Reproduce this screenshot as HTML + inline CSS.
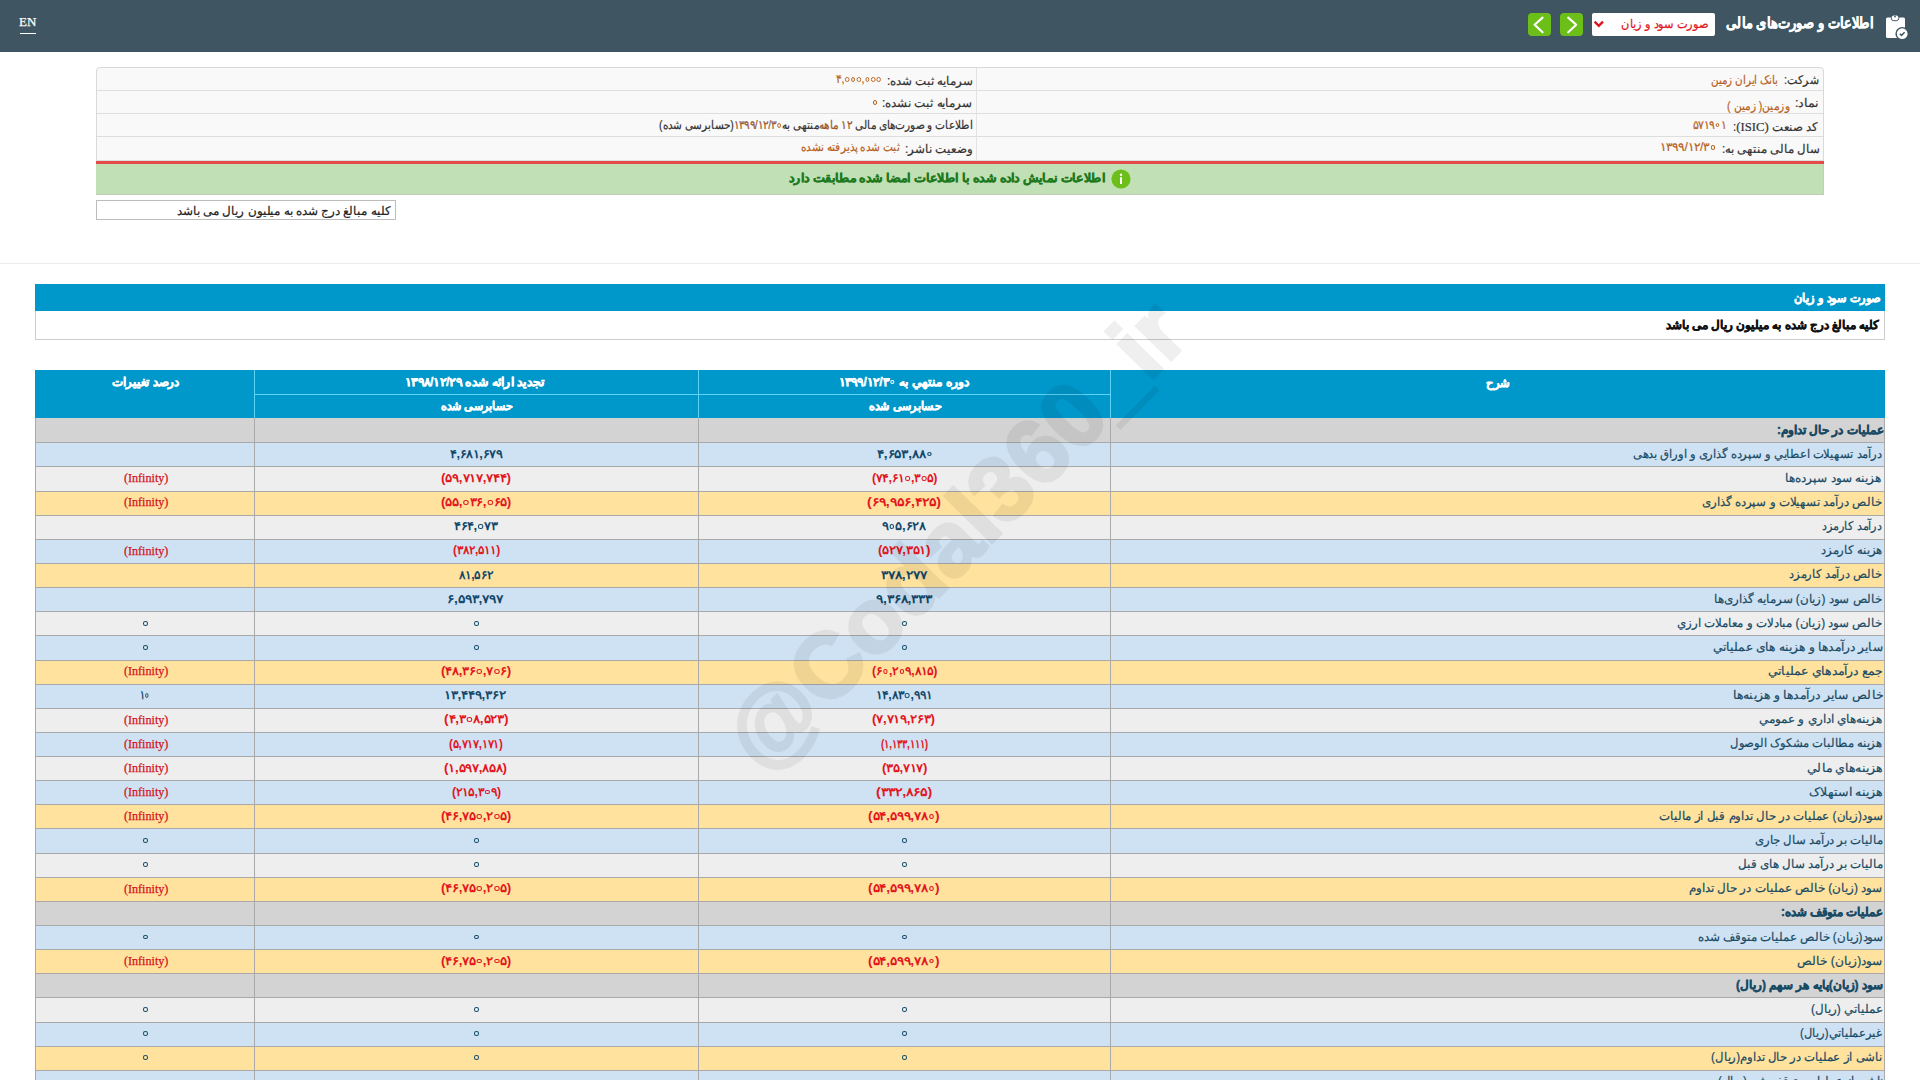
<!DOCTYPE html><html lang="fa"><head><meta charset="utf-8"><title>Codal</title><style>
*{margin:0;padding:0;box-sizing:border-box}
html,body{width:1920px;height:1080px;overflow:hidden;background:#fff}
body{position:relative;font-family:"Liberation Sans",sans-serif}
.a{position:absolute}
.t{position:absolute;white-space:nowrap;line-height:1;transform-origin:0 0}
.z{display:inline-block;width:4.6px;height:4.6px;border:1.6px solid currentColor;border-radius:50%;margin:0 0.9px;vertical-align:1.4px}
.zn{border-width:1.3px}
</style></head><body>
<div class="a" style="left:0;top:0;width:1920px;height:52px;background:#3f5562"></div>
<div class="a" style="left:20px;top:33px;width:16px;height:1px;background:#fff"></div>
<div class="a" style="left:1528px;top:13px;width:23px;height:23px;background:#6cbf18;border-radius:4px"></div>
<svg class="a" style="left:1528px;top:13px" width="23" height="23"><path d="M14.6 4.6 L6.6 11.8 L14.6 19.2" fill="none" stroke="#fff" stroke-width="2.1" stroke-linecap="round" stroke-linejoin="round"/></svg>
<div class="a" style="left:1560px;top:13px;width:23px;height:23px;background:#6cbf18;border-radius:4px"></div>
<svg class="a" style="left:1560px;top:13px" width="23" height="23"><path d="M8.2 4.6 L16.2 11.8 L8.2 19.2" fill="none" stroke="#fff" stroke-width="2.1" stroke-linecap="round" stroke-linejoin="round"/></svg>
<div class="a" style="left:1592px;top:13px;width:123px;height:23px;background:#fff;border-radius:2px"></div>
<svg class="a" style="left:1592px;top:19px" width="14" height="10"><path d="M2.6 2.6 L6.8 6.8 L11 2.6" fill="none" stroke="#e0141e" stroke-width="2.4"/></svg>
<svg class="a" style="left:1880px;top:10px" width="35" height="35" viewBox="0 0 35 35">
<rect x="6" y="7.5" width="19" height="20.5" rx="1.5" fill="#fff"/>
<rect x="11.3" y="5" width="7.5" height="5.7" rx="2.5" fill="#fff" stroke="#3f5562" stroke-width="1"/>
<circle cx="15" cy="6.5" r="0.9" fill="#3f5562"/>
<circle cx="22.2" cy="23.7" r="6.8" fill="#3f5562"/>
<circle cx="22.2" cy="23.7" r="5.4" fill="#fff"/>
<path d="M19.8 23.8 L21.5 25.4 L24.6 22.3" fill="none" stroke="#3f5562" stroke-width="1.5"/>
</svg>
<div class="a" style="left:96px;top:67px;width:1728px;height:97px;background:#f9f9f9;border:1px solid #d9d9d9;border-radius:4px 4px 0 0"></div>
<div class="a" style="left:97px;top:90px;width:1726px;height:1px;background:#dedede"></div>
<div class="a" style="left:97px;top:113px;width:1726px;height:1px;background:#dedede"></div>
<div class="a" style="left:97px;top:136px;width:1726px;height:1px;background:#dedede"></div>
<div class="a" style="left:97px;top:160px;width:1726px;height:1px;background:#dedede"></div>
<div class="a" style="left:976px;top:68px;width:1px;height:92px;background:#e2e2e2"></div>
<div class="a" style="left:96px;top:164px;width:1728px;height:31px;background:#c2e0b5;border-right:1px solid #c0cfbc;border-bottom:1px solid #bccab8"></div>
<div class="a" style="left:96px;top:161px;width:1728px;height:3px;background:#e44a48"></div>
<svg class="a" style="left:1111px;top:169px" width="20" height="20"><circle cx="10" cy="10" r="9.6" fill="#6cbf18"/><rect x="9" y="8.2" width="2" height="6.8" fill="#fff"/><circle cx="10" cy="5.7" r="1.2" fill="#fff"/></svg>
<div class="a" style="left:96px;top:200px;width:300px;height:20px;background:#fff;border:1px solid #bcbcbc"></div>
<div class="a" style="left:0;top:263px;width:1920px;height:1px;background:#ececec"></div>
<div class="a" style="left:35px;top:284px;width:1850px;height:27px;background:#0097ca"></div>
<div class="a" style="left:35px;top:311px;width:1850px;height:29px;background:#fff;border:1px solid #cccccc;border-top:0"></div>
<div class="a" style="left:35px;top:370px;width:1850px;height:48px;background:#0097ca"></div>
<div class="a" style="left:254px;top:370px;width:1px;height:48px;background:#5dd3f7"></div>
<div class="a" style="left:698px;top:370px;width:1px;height:48px;background:#5dd3f7"></div>
<div class="a" style="left:1110px;top:370px;width:1px;height:48px;background:#5dd3f7"></div>
<div class="a" style="left:254px;top:394px;width:856px;height:1px;background:#5dd3f7"></div>
<div class="a" style="left:35px;top:418px;width:1850px;height:24px;background:#d3d3d3"></div>
<div class="a" style="left:35px;top:442px;width:1850px;height:1px;background:#a9a9a9"></div>
<div class="a" style="left:35px;top:443px;width:1850px;height:23px;background:#cfe2f3"></div>
<div class="a" style="left:35px;top:466px;width:1850px;height:1px;background:#a9a9a9"></div>
<div class="a" style="left:35px;top:467px;width:1850px;height:24px;background:#eeeeee"></div>
<div class="a" style="left:35px;top:491px;width:1850px;height:1px;background:#a9a9a9"></div>
<div class="a" style="left:35px;top:492px;width:1850px;height:23px;background:#ffe29d"></div>
<div class="a" style="left:35px;top:515px;width:1850px;height:1px;background:#a9a9a9"></div>
<div class="a" style="left:35px;top:516px;width:1850px;height:23px;background:#eeeeee"></div>
<div class="a" style="left:35px;top:539px;width:1850px;height:1px;background:#a9a9a9"></div>
<div class="a" style="left:35px;top:540px;width:1850px;height:23px;background:#cfe2f3"></div>
<div class="a" style="left:35px;top:563px;width:1850px;height:1px;background:#a9a9a9"></div>
<div class="a" style="left:35px;top:564px;width:1850px;height:23px;background:#ffe29d"></div>
<div class="a" style="left:35px;top:587px;width:1850px;height:1px;background:#a9a9a9"></div>
<div class="a" style="left:35px;top:588px;width:1850px;height:23px;background:#cfe2f3"></div>
<div class="a" style="left:35px;top:611px;width:1850px;height:1px;background:#a9a9a9"></div>
<div class="a" style="left:35px;top:612px;width:1850px;height:23px;background:#eeeeee"></div>
<div class="a" style="left:35px;top:635px;width:1850px;height:1px;background:#a9a9a9"></div>
<div class="a" style="left:35px;top:636px;width:1850px;height:24px;background:#cfe2f3"></div>
<div class="a" style="left:35px;top:660px;width:1850px;height:1px;background:#a9a9a9"></div>
<div class="a" style="left:35px;top:661px;width:1850px;height:23px;background:#ffe29d"></div>
<div class="a" style="left:35px;top:684px;width:1850px;height:1px;background:#a9a9a9"></div>
<div class="a" style="left:35px;top:685px;width:1850px;height:23px;background:#cfe2f3"></div>
<div class="a" style="left:35px;top:708px;width:1850px;height:1px;background:#a9a9a9"></div>
<div class="a" style="left:35px;top:709px;width:1850px;height:23px;background:#eeeeee"></div>
<div class="a" style="left:35px;top:732px;width:1850px;height:1px;background:#a9a9a9"></div>
<div class="a" style="left:35px;top:733px;width:1850px;height:23px;background:#cfe2f3"></div>
<div class="a" style="left:35px;top:756px;width:1850px;height:1px;background:#a9a9a9"></div>
<div class="a" style="left:35px;top:757px;width:1850px;height:23px;background:#eeeeee"></div>
<div class="a" style="left:35px;top:780px;width:1850px;height:1px;background:#a9a9a9"></div>
<div class="a" style="left:35px;top:781px;width:1850px;height:23px;background:#cfe2f3"></div>
<div class="a" style="left:35px;top:804px;width:1850px;height:1px;background:#a9a9a9"></div>
<div class="a" style="left:35px;top:805px;width:1850px;height:23px;background:#ffe29d"></div>
<div class="a" style="left:35px;top:828px;width:1850px;height:1px;background:#a9a9a9"></div>
<div class="a" style="left:35px;top:829px;width:1850px;height:24px;background:#cfe2f3"></div>
<div class="a" style="left:35px;top:853px;width:1850px;height:1px;background:#a9a9a9"></div>
<div class="a" style="left:35px;top:854px;width:1850px;height:23px;background:#eeeeee"></div>
<div class="a" style="left:35px;top:877px;width:1850px;height:1px;background:#a9a9a9"></div>
<div class="a" style="left:35px;top:878px;width:1850px;height:23px;background:#ffe29d"></div>
<div class="a" style="left:35px;top:901px;width:1850px;height:1px;background:#a9a9a9"></div>
<div class="a" style="left:35px;top:902px;width:1850px;height:23px;background:#d3d3d3"></div>
<div class="a" style="left:35px;top:925px;width:1850px;height:1px;background:#a9a9a9"></div>
<div class="a" style="left:35px;top:926px;width:1850px;height:23px;background:#cfe2f3"></div>
<div class="a" style="left:35px;top:949px;width:1850px;height:1px;background:#a9a9a9"></div>
<div class="a" style="left:35px;top:950px;width:1850px;height:23px;background:#ffe29d"></div>
<div class="a" style="left:35px;top:973px;width:1850px;height:1px;background:#a9a9a9"></div>
<div class="a" style="left:35px;top:974px;width:1850px;height:23px;background:#d3d3d3"></div>
<div class="a" style="left:35px;top:997px;width:1850px;height:1px;background:#a9a9a9"></div>
<div class="a" style="left:35px;top:998px;width:1850px;height:24px;background:#eeeeee"></div>
<div class="a" style="left:35px;top:1022px;width:1850px;height:1px;background:#a9a9a9"></div>
<div class="a" style="left:35px;top:1023px;width:1850px;height:23px;background:#cfe2f3"></div>
<div class="a" style="left:35px;top:1046px;width:1850px;height:1px;background:#a9a9a9"></div>
<div class="a" style="left:35px;top:1047px;width:1850px;height:23px;background:#ffe29d"></div>
<div class="a" style="left:35px;top:1070px;width:1850px;height:1px;background:#a9a9a9"></div>
<div class="a" style="left:35px;top:1071px;width:1850px;height:23px;background:#cfe2f3"></div>
<div class="a" style="left:35px;top:1094px;width:1850px;height:1px;background:#a9a9a9"></div>
<div class="a" style="left:872.90px;top:100.00px;width:4.6px;height:4.6px;border:1.3px solid #b8621f;border-radius:50%"></div>
<div class="a" style="left:902.40px;top:620.92px;width:4.8px;height:4.6px;border:1.7px solid #164a66;border-radius:50%"></div>
<div class="a" style="left:474.40px;top:620.92px;width:4.8px;height:4.6px;border:1.7px solid #164a66;border-radius:50%"></div>
<div class="a" style="left:143.40px;top:620.92px;width:4.8px;height:4.6px;border:1.7px solid #164a66;border-radius:50%"></div>
<div class="a" style="left:902.40px;top:645.06px;width:4.8px;height:4.6px;border:1.7px solid #164a66;border-radius:50%"></div>
<div class="a" style="left:474.40px;top:645.06px;width:4.8px;height:4.6px;border:1.7px solid #164a66;border-radius:50%"></div>
<div class="a" style="left:143.40px;top:645.06px;width:4.8px;height:4.6px;border:1.7px solid #164a66;border-radius:50%"></div>
<div class="a" style="left:902.40px;top:838.18px;width:4.8px;height:4.6px;border:1.7px solid #164a66;border-radius:50%"></div>
<div class="a" style="left:474.40px;top:838.18px;width:4.8px;height:4.6px;border:1.7px solid #164a66;border-radius:50%"></div>
<div class="a" style="left:143.40px;top:838.18px;width:4.8px;height:4.6px;border:1.7px solid #164a66;border-radius:50%"></div>
<div class="a" style="left:902.40px;top:862.32px;width:4.8px;height:4.6px;border:1.7px solid #164a66;border-radius:50%"></div>
<div class="a" style="left:474.40px;top:862.32px;width:4.8px;height:4.6px;border:1.7px solid #164a66;border-radius:50%"></div>
<div class="a" style="left:143.40px;top:862.32px;width:4.8px;height:4.6px;border:1.7px solid #164a66;border-radius:50%"></div>
<div class="a" style="left:902.40px;top:934.74px;width:4.8px;height:4.6px;border:1.7px solid #164a66;border-radius:50%"></div>
<div class="a" style="left:474.40px;top:934.74px;width:4.8px;height:4.6px;border:1.7px solid #164a66;border-radius:50%"></div>
<div class="a" style="left:143.40px;top:934.74px;width:4.8px;height:4.6px;border:1.7px solid #164a66;border-radius:50%"></div>
<div class="a" style="left:902.40px;top:1007.16px;width:4.8px;height:4.6px;border:1.7px solid #164a66;border-radius:50%"></div>
<div class="a" style="left:474.40px;top:1007.16px;width:4.8px;height:4.6px;border:1.7px solid #164a66;border-radius:50%"></div>
<div class="a" style="left:143.40px;top:1007.16px;width:4.8px;height:4.6px;border:1.7px solid #164a66;border-radius:50%"></div>
<div class="a" style="left:902.40px;top:1031.30px;width:4.8px;height:4.6px;border:1.7px solid #164a66;border-radius:50%"></div>
<div class="a" style="left:474.40px;top:1031.30px;width:4.8px;height:4.6px;border:1.7px solid #164a66;border-radius:50%"></div>
<div class="a" style="left:143.40px;top:1031.30px;width:4.8px;height:4.6px;border:1.7px solid #164a66;border-radius:50%"></div>
<div class="a" style="left:902.40px;top:1055.44px;width:4.8px;height:4.6px;border:1.7px solid #164a66;border-radius:50%"></div>
<div class="a" style="left:474.40px;top:1055.44px;width:4.8px;height:4.6px;border:1.7px solid #164a66;border-radius:50%"></div>
<div class="a" style="left:143.40px;top:1055.44px;width:4.8px;height:4.6px;border:1.7px solid #164a66;border-radius:50%"></div>
<div class="a" style="left:902.40px;top:1079.58px;width:4.8px;height:4.6px;border:1.7px solid #164a66;border-radius:50%"></div>
<div class="a" style="left:474.40px;top:1079.58px;width:4.8px;height:4.6px;border:1.7px solid #164a66;border-radius:50%"></div>
<div class="a" style="left:143.40px;top:1079.58px;width:4.8px;height:4.6px;border:1.7px solid #164a66;border-radius:50%"></div>
<div class="a" style="left:35px;top:418px;width:1px;height:662px;background:#a9a9a9"></div>
<div class="a" style="left:1884px;top:418px;width:1px;height:662px;background:#a9a9a9"></div>
<div class="a" style="left:254px;top:418px;width:1px;height:662px;background:#a9a9a9"></div>
<div class="a" style="left:698px;top:418px;width:1px;height:662px;background:#a9a9a9"></div>
<div class="a" style="left:1110px;top:418px;width:1px;height:662px;background:#a9a9a9"></div>
<div class="t" id="t0" dir="rtl" style='left:1726.13px;top:15.00px;font-family:"Liberation Sans", sans-serif;font-size:15px;font-weight:bold;color:#ffffff;-webkit-text-stroke:0.45px #ffffff;transform:scaleX(0.8639)'>اطلاعات و صورت‌های مالی</div>
<div class="t" id="t1" dir="rtl" style='left:1621.08px;top:18.00px;font-family:"Liberation Sans", sans-serif;font-size:12px;font-weight:normal;color:#e0141e;-webkit-text-stroke:0.2px #e0141e;transform:scaleX(0.9451)'>صورت سود و زیان</div>
<div class="t" id="t2" dir="ltr" style='left:19.00px;top:15.17px;font-family:"Liberation Serif", serif;font-size:13px;font-weight:normal;color:#ffffff;-webkit-text-stroke:0.25px #ffffff'>EN</div>
<div class="t" id="t3" dir="rtl" style='left:1783.84px;top:74.30px;font-family:"Liberation Sans", sans-serif;font-size:12px;font-weight:normal;color:#333333;-webkit-text-stroke:0.2px #333333;transform:scaleX(0.9118)'>شرکت:</div>
<div class="t" id="t4" dir="rtl" style='left:1710.54px;top:74.00px;font-family:"Liberation Sans", sans-serif;font-size:12px;font-weight:normal;color:#b8621f;-webkit-text-stroke:0.2px #b8621f;transform:scaleX(0.8634)'>بانک ایران زمین</div>
<div class="t" id="t5" dir="rtl" style='left:1794.95px;top:97.00px;font-family:"Liberation Sans", sans-serif;font-size:12px;font-weight:normal;color:#333333;-webkit-text-stroke:0.2px #333333;transform:scaleX(1.0476)'>نماد:</div>
<div class="t" id="t6" dir="rtl" style='left:1727.11px;top:100.00px;font-family:"Liberation Sans", sans-serif;font-size:12px;font-weight:normal;color:#b8621f;-webkit-text-stroke:0.2px #b8621f;transform:scaleX(0.8927)'>وزمین( زمین )</div>
<div class="t" id="t7" dir="rtl" style='left:1732.80px;top:120.40px;font-family:"Liberation Sans", sans-serif;font-size:12px;font-weight:normal;color:#333333;-webkit-text-stroke:0.2px #333333;transform:scaleX(0.9748)'>کد صنعت <span style="font-family:'Liberation Serif',serif;font-size:13px">(ISIC)</span>:</div>
<div class="t" id="t8" dir="ltr" style='left:1692.94px;top:118.60px;font-family:"Liberation Sans", sans-serif;font-size:12px;font-weight:normal;color:#b8621f;-webkit-text-stroke:0.2px #b8621f;transform:scaleX(0.9076)'>۵۷۱۹<span class="z zn"></span>۱</div>
<div class="t" id="t9" dir="rtl" style='left:1721.63px;top:143.00px;font-family:"Liberation Sans", sans-serif;font-size:12px;font-weight:normal;color:#333333;-webkit-text-stroke:0.2px #333333;transform:scaleX(0.9805)'>سال مالی منتهی به:</div>
<div class="t" id="t10" dir="ltr" style='left:1659.96px;top:141.20px;font-family:"Liberation Sans", sans-serif;font-size:12px;font-weight:normal;color:#b8621f;-webkit-text-stroke:0.2px #b8621f;transform:scaleX(1.0192)'>۱۳۹۹/۱۲/۳<span class="z zn"></span></div>
<div class="t" id="t11" dir="rtl" style='left:887.01px;top:74.80px;font-family:"Liberation Sans", sans-serif;font-size:12px;font-weight:normal;color:#333333;-webkit-text-stroke:0.2px #333333;transform:scaleX(0.9882)'>سرمایه ثبت شده:</div>
<div class="t" id="t12" dir="ltr" style='left:835.77px;top:73.00px;font-family:"Liberation Sans", sans-serif;font-size:12px;font-weight:normal;color:#b8621f;-webkit-text-stroke:0.2px #b8621f;transform:scaleX(0.8972)'>۴,<span class="z zn"></span><span class="z zn"></span><span class="z zn"></span>,<span class="z zn"></span><span class="z zn"></span><span class="z zn"></span></div>
<div class="t" id="t13" dir="rtl" style='left:882.21px;top:97.00px;font-family:"Liberation Sans", sans-serif;font-size:12px;font-weight:normal;color:#333333;-webkit-text-stroke:0.2px #333333;transform:scaleX(0.9911)'>سرمایه ثبت نشده:</div>
<div class="t" id="t14" dir="rtl" style='left:659.12px;top:119.20px;font-family:"Liberation Sans", sans-serif;font-size:12px;font-weight:normal;color:#333333;-webkit-text-stroke:0.2px #333333;transform:scaleX(0.8764)'>اطلاعات و صورت‌های مالی <span style="color:#b8621f">۱۲ ماهه</span>‌منتهی به<span style="color:#b8621f"><bdi dir="ltr">۱۳۹۹/۱۲/۳<span class="z zn"></span></bdi></span>(حسابرسی شده)</div>
<div class="t" id="t15" dir="rtl" style='left:905.01px;top:143.30px;font-family:"Liberation Sans", sans-serif;font-size:12px;font-weight:normal;color:#333333;-webkit-text-stroke:0.2px #333333;transform:scaleX(0.9851)'>وضعیت ناشر:</div>
<div class="t" id="t16" dir="rtl" style='left:800.75px;top:141.30px;font-family:"Liberation Sans", sans-serif;font-size:12px;font-weight:normal;color:#b8621f;-webkit-text-stroke:0.2px #b8621f;transform:scaleX(0.8766)'>ثبت شده پذیرفته نشده</div>
<div class="t" id="t17" dir="rtl" style='left:789.00px;top:172.00px;font-family:"Liberation Sans", sans-serif;font-size:12px;font-weight:bold;color:#1f7a1f;-webkit-text-stroke:0.45px #1f7a1f;transform:scaleX(1.0569)'>اطلاعات نمایش داده شده با اطلاعات امضا شده مطابقت دارد</div>
<div class="t" id="t18" dir="rtl" style='left:177.01px;top:205.20px;font-family:"Liberation Sans", sans-serif;font-size:12px;font-weight:normal;color:#222222;-webkit-text-stroke:0.2px #222222;transform:scaleX(0.9945)'>کلیه مبالغ درج شده به میلیون ریال می باشد</div>
<div class="t" id="t19" dir="rtl" style='left:1794.02px;top:292.00px;font-family:"Liberation Sans", sans-serif;font-size:12px;font-weight:bold;color:#ffffff;-webkit-text-stroke:0.45px #ffffff;transform:scaleX(0.9428)'>صورت سود و زیان</div>
<div class="t" id="t20" dir="rtl" style='left:1666.00px;top:318.80px;font-family:"Liberation Sans", sans-serif;font-size:12px;font-weight:bold;color:#111111;-webkit-text-stroke:0.45px #111111;transform:scaleX(0.9917)'>کلیه مبالغ درج شده به میلیون ریال می باشد</div>
<div class="t" id="t21" dir="rtl" style='left:1485.66px;top:377.30px;font-family:"Liberation Sans", sans-serif;font-size:12px;font-weight:bold;color:#ffffff;-webkit-text-stroke:0.45px #ffffff;transform:scaleX(0.9636)'>شرح</div>
<div class="t" id="t22" dir="rtl" style='left:838.97px;top:375.50px;font-family:"Liberation Sans", sans-serif;font-size:12px;font-weight:bold;color:#ffffff;-webkit-text-stroke:0.45px #ffffff;transform:scaleX(1.0257)'>دوره منتهي به <bdi dir="ltr">۱۳۹۹/۱۲/۳<span class="z"></span></bdi></div>
<div class="t" id="t23" dir="rtl" style='left:869.05px;top:399.50px;font-family:"Liberation Sans", sans-serif;font-size:12px;font-weight:bold;color:#ffffff;-webkit-text-stroke:0.45px #ffffff;transform:scaleX(0.9328)'>حسابرسی شده</div>
<div class="t" id="t24" dir="rtl" style='left:405.36px;top:375.70px;font-family:"Liberation Sans", sans-serif;font-size:12px;font-weight:bold;color:#ffffff;-webkit-text-stroke:0.45px #ffffff;transform:scaleX(1.0419)'>تجدید ارائه شده ۱۳۹۸/۱۲/۲۹</div>
<div class="t" id="t25" dir="rtl" style='left:441.20px;top:399.60px;font-family:"Liberation Sans", sans-serif;font-size:12px;font-weight:bold;color:#ffffff;-webkit-text-stroke:0.45px #ffffff;transform:scaleX(0.9240)'>حسابرسی شده</div>
<div class="t" id="t26" dir="rtl" style='left:112.00px;top:375.50px;font-family:"Liberation Sans", sans-serif;font-size:12px;font-weight:bold;color:#ffffff;-webkit-text-stroke:0.45px #ffffff;transform:scaleX(0.9853)'>درصد تغییرات</div>
<div class="t" id="t27" dir="rtl" style='left:1776.99px;top:423.60px;font-family:"Liberation Sans", sans-serif;font-size:12px;font-weight:bold;color:#194a64;-webkit-text-stroke:0.45px #194a64;transform:scaleX(0.9955)'>عملیات در حال تداوم:</div>
<div class="t" id="t28" dir="rtl" style='left:1633.04px;top:447.74px;font-family:"Liberation Sans", sans-serif;font-size:12px;font-weight:normal;color:#194a64;-webkit-text-stroke:0.2px #194a64;transform:scaleX(0.9650)'>درآمد تسهیلات اعطایي و سپرده گذاری و اوراق بدهی</div>
<div class="t" id="t29" dir="ltr" style='left:877.00px;top:447.84px;font-family:"Liberation Sans", sans-serif;font-size:12px;font-weight:bold;color:#13486a;transform:scaleX(1.1397)'>۴,۶۵۳,۸۸<span class="z"></span></div>
<div class="t" id="t30" dir="ltr" style='left:449.60px;top:447.84px;font-family:"Liberation Sans", sans-serif;font-size:12px;font-weight:bold;color:#13486a;transform:scaleX(1.0717)'>۴,۶۸۱,۶۷۹</div>
<div class="t" id="t31" dir="rtl" style='left:1785.40px;top:471.88px;font-family:"Liberation Sans", sans-serif;font-size:12px;font-weight:normal;color:#194a64;-webkit-text-stroke:0.2px #194a64;transform:scaleX(1.0044)'>هزینه سود سپرده‌ها</div>
<div class="t" id="t32" dir="ltr" style='left:871.58px;top:471.98px;font-family:"Liberation Sans", sans-serif;font-size:12px;font-weight:bold;color:#e3161e;transform:scaleX(1.0320)'>(۷۴,۶۱<span class="z"></span>,۳<span class="z"></span>۵)</div>
<div class="t" id="t33" dir="ltr" style='left:441.17px;top:471.98px;font-family:"Liberation Sans", sans-serif;font-size:12px;font-weight:bold;color:#e3161e;transform:scaleX(1.1164)'>(۵۹,۷۱۷,۷۴۴)</div>
<div class="t" id="t34" dir="ltr" style='left:123.62px;top:472.26px;font-family:"Liberation Serif", serif;font-size:12.5px;font-weight:normal;color:#d3121b;-webkit-text-stroke:0.25px #d3121b;transform:scaleX(0.9670)'>(Infinity)</div>
<div class="t" id="t35" dir="rtl" style='left:1702.02px;top:496.02px;font-family:"Liberation Sans", sans-serif;font-size:12px;font-weight:normal;color:#194a64;-webkit-text-stroke:0.2px #194a64;transform:scaleX(0.9835)'>خالص درآمد تسهیلات و سپرده گذاری</div>
<div class="t" id="t36" dir="ltr" style='left:867.42px;top:496.12px;font-family:"Liberation Sans", sans-serif;font-size:12px;font-weight:bold;color:#e3161e;transform:scaleX(1.1792)'>(۶۹,۹۵۶,۴۲۵)</div>
<div class="t" id="t37" dir="ltr" style='left:440.79px;top:496.12px;font-family:"Liberation Sans", sans-serif;font-size:12px;font-weight:bold;color:#e3161e;transform:scaleX(1.1083)'>(۵۵,<span class="z"></span>۳۶,<span class="z"></span>۶۵)</div>
<div class="t" id="t38" dir="ltr" style='left:123.62px;top:496.40px;font-family:"Liberation Serif", serif;font-size:12.5px;font-weight:normal;color:#d3121b;-webkit-text-stroke:0.25px #d3121b;transform:scaleX(0.9670)'>(Infinity)</div>
<div class="t" id="t39" dir="rtl" style='left:1822.07px;top:520.16px;font-family:"Liberation Sans", sans-serif;font-size:12px;font-weight:normal;color:#194a64;-webkit-text-stroke:0.2px #194a64;transform:scaleX(0.9357)'>درآمد کارمزد</div>
<div class="t" id="t40" dir="ltr" style='left:882.41px;top:520.26px;font-family:"Liberation Sans", sans-serif;font-size:12px;font-weight:bold;color:#13486a;transform:scaleX(1.0884)'>۹<span class="z"></span>۵,۶۲۸</div>
<div class="t" id="t41" dir="ltr" style='left:454.39px;top:520.26px;font-family:"Liberation Sans", sans-serif;font-size:12px;font-weight:bold;color:#13486a;transform:scaleX(1.0872)'>۴۶۴,<span class="z"></span>۷۳</div>
<div class="t" id="t42" dir="rtl" style='left:1821.03px;top:544.30px;font-family:"Liberation Sans", sans-serif;font-size:12px;font-weight:normal;color:#194a64;-webkit-text-stroke:0.2px #194a64;transform:scaleX(0.9677)'>هزینه کارمزد</div>
<div class="t" id="t43" dir="ltr" style='left:877.75px;top:544.40px;font-family:"Liberation Sans", sans-serif;font-size:12px;font-weight:bold;color:#e3161e;transform:scaleX(1.1049)'>(۵۲۷,۳۵۱)</div>
<div class="t" id="t44" dir="ltr" style='left:452.59px;top:544.40px;font-family:"Liberation Sans", sans-serif;font-size:12px;font-weight:bold;color:#e3161e;transform:scaleX(1.0004)'>(۳۸۲,۵۱۱)</div>
<div class="t" id="t45" dir="ltr" style='left:123.62px;top:544.68px;font-family:"Liberation Serif", serif;font-size:12.5px;font-weight:normal;color:#d3121b;-webkit-text-stroke:0.25px #d3121b;transform:scaleX(0.9670)'>(Infinity)</div>
<div class="t" id="t46" dir="rtl" style='left:1789.04px;top:568.44px;font-family:"Liberation Sans", sans-serif;font-size:12px;font-weight:normal;color:#194a64;-webkit-text-stroke:0.2px #194a64;transform:scaleX(0.9586)'>خالص درآمد کارمزد</div>
<div class="t" id="t47" dir="ltr" style='left:881.27px;top:568.54px;font-family:"Liberation Sans", sans-serif;font-size:12px;font-weight:bold;color:#13486a;transform:scaleX(1.1556)'>۳۷۸,۲۷۷</div>
<div class="t" id="t48" dir="ltr" style='left:459.18px;top:568.54px;font-family:"Liberation Sans", sans-serif;font-size:12px;font-weight:bold;color:#13486a;transform:scaleX(1.0107)'>۸۱,۵۶۲</div>
<div class="t" id="t49" dir="rtl" style='left:1714.01px;top:592.58px;font-family:"Liberation Sans", sans-serif;font-size:12px;font-weight:normal;color:#194a64;-webkit-text-stroke:0.2px #194a64;transform:scaleX(0.9882)'>خالص سود (زیان) سرمایه گذاری‌ها</div>
<div class="t" id="t50" dir="ltr" style='left:875.83px;top:592.68px;font-family:"Liberation Sans", sans-serif;font-size:12px;font-weight:bold;color:#13486a;transform:scaleX(1.1491)'>۹,۳۶۸,۳۳۳</div>
<div class="t" id="t51" dir="ltr" style='left:446.67px;top:592.68px;font-family:"Liberation Sans", sans-serif;font-size:12px;font-weight:bold;color:#13486a;transform:scaleX(1.1556)'>۶,۵۹۳,۷۹۷</div>
<div class="t" id="t52" dir="rtl" style='left:1677.01px;top:616.72px;font-family:"Liberation Sans", sans-serif;font-size:12px;font-weight:normal;color:#194a64;-webkit-text-stroke:0.2px #194a64;transform:scaleX(0.9855)'>خالص سود (زیان) مبادلات و معاملات ارزي</div>
<div class="t" id="t53" dir="rtl" style='left:1712.98px;top:640.86px;font-family:"Liberation Sans", sans-serif;font-size:12px;font-weight:normal;color:#194a64;-webkit-text-stroke:0.2px #194a64;transform:scaleX(1.0182)'>سایر درآمدها و هزینه های عملیاتي</div>
<div class="t" id="t54" dir="rtl" style='left:1767.96px;top:665.00px;font-family:"Liberation Sans", sans-serif;font-size:12px;font-weight:normal;color:#194a64;-webkit-text-stroke:0.2px #194a64;transform:scaleX(1.0365)'>جمع درآمدهاي عملیاتي</div>
<div class="t" id="t55" dir="ltr" style='left:871.58px;top:665.10px;font-family:"Liberation Sans", sans-serif;font-size:12px;font-weight:bold;color:#e3161e;transform:scaleX(1.0320)'>(۶<span class="z"></span>,۲<span class="z"></span>۹,۸۱۵)</div>
<div class="t" id="t56" dir="ltr" style='left:440.79px;top:665.10px;font-family:"Liberation Sans", sans-serif;font-size:12px;font-weight:bold;color:#e3161e;transform:scaleX(1.1083)'>(۴۸,۳۶<span class="z"></span>,۷<span class="z"></span>۶)</div>
<div class="t" id="t57" dir="ltr" style='left:123.62px;top:665.38px;font-family:"Liberation Serif", serif;font-size:12.5px;font-weight:normal;color:#d3121b;-webkit-text-stroke:0.25px #d3121b;transform:scaleX(0.9670)'>(Infinity)</div>
<div class="t" id="t58" dir="rtl" style='left:1732.95px;top:689.14px;font-family:"Liberation Sans", sans-serif;font-size:12px;font-weight:normal;color:#194a64;-webkit-text-stroke:0.2px #194a64;transform:scaleX(1.0312)'>خالص سایر درآمدها و هزینه‌ها</div>
<div class="t" id="t59" dir="ltr" style='left:876.38px;top:689.24px;font-family:"Liberation Sans", sans-serif;font-size:12px;font-weight:bold;color:#13486a;transform:scaleX(1.0210)'>۱۴,۸۳<span class="z"></span>,۹۹۱</div>
<div class="t" id="t60" dir="ltr" style='left:444.30px;top:689.24px;font-family:"Liberation Sans", sans-serif;font-size:12px;font-weight:bold;color:#13486a;transform:scaleX(1.1225)'>۱۳,۴۴۹,۳۶۲</div>
<div class="t" id="t61" dir="ltr" style='left:140.27px;top:689.24px;font-family:"Liberation Sans", sans-serif;font-size:12px;font-weight:bold;color:#13486a;transform:scaleX(0.7582)'>۱<span class="z"></span></div>
<div class="t" id="t62" dir="rtl" style='left:1759.00px;top:713.28px;font-family:"Liberation Sans", sans-serif;font-size:12px;font-weight:normal;color:#194a64;-webkit-text-stroke:0.2px #194a64'>هزینه‌هاي اداري و عمومي</div>
<div class="t" id="t63" dir="ltr" style='left:872.35px;top:713.38px;font-family:"Liberation Sans", sans-serif;font-size:12px;font-weight:bold;color:#e3161e;transform:scaleX(1.1091)'>(۷,۷۱۹,۲۶۳)</div>
<div class="t" id="t64" dir="ltr" style='left:443.77px;top:713.38px;font-family:"Liberation Sans", sans-serif;font-size:12px;font-weight:bold;color:#e3161e;transform:scaleX(1.1303)'>(۴,۳<span class="z"></span>۸,۵۲۳)</div>
<div class="t" id="t65" dir="ltr" style='left:123.62px;top:713.66px;font-family:"Liberation Serif", serif;font-size:12.5px;font-weight:normal;color:#d3121b;-webkit-text-stroke:0.25px #d3121b;transform:scaleX(0.9670)'>(Infinity)</div>
<div class="t" id="t66" dir="rtl" style='left:1730.04px;top:737.42px;font-family:"Liberation Sans", sans-serif;font-size:12px;font-weight:normal;color:#194a64;-webkit-text-stroke:0.2px #194a64;transform:scaleX(0.9618)'>هزینه مطالبات مشکوک الوصول</div>
<div class="t" id="t67" dir="ltr" style='left:880.61px;top:737.52px;font-family:"Liberation Sans", sans-serif;font-size:12px;font-weight:bold;color:#e3161e;transform:scaleX(0.8307)'>(۱,۱۳۳,۱۱۱)</div>
<div class="t" id="t68" dir="ltr" style='left:449.03px;top:737.52px;font-family:"Liberation Sans", sans-serif;font-size:12px;font-weight:bold;color:#e3161e;transform:scaleX(0.9517)'>(۵,۷۱۷,۱۷۱)</div>
<div class="t" id="t69" dir="ltr" style='left:123.62px;top:737.80px;font-family:"Liberation Serif", serif;font-size:12.5px;font-weight:normal;color:#d3121b;-webkit-text-stroke:0.25px #d3121b;transform:scaleX(0.9670)'>(Infinity)</div>
<div class="t" id="t70" dir="rtl" style='left:1806.96px;top:761.56px;font-family:"Liberation Sans", sans-serif;font-size:12px;font-weight:normal;color:#194a64;-webkit-text-stroke:0.2px #194a64;transform:scaleX(1.0423)'>هزینه‌هاي مالي</div>
<div class="t" id="t71" dir="ltr" style='left:881.94px;top:761.66px;font-family:"Liberation Sans", sans-serif;font-size:12px;font-weight:bold;color:#e3161e;transform:scaleX(1.0954)'>(۳۵,۷۱۷)</div>
<div class="t" id="t72" dir="ltr" style='left:444.35px;top:761.66px;font-family:"Liberation Sans", sans-serif;font-size:12px;font-weight:bold;color:#e3161e;transform:scaleX(1.1091)'>(۱,۵۹۷,۸۵۸)</div>
<div class="t" id="t73" dir="ltr" style='left:123.62px;top:761.94px;font-family:"Liberation Serif", serif;font-size:12.5px;font-weight:normal;color:#d3121b;-webkit-text-stroke:0.25px #d3121b;transform:scaleX(0.9670)'>(Infinity)</div>
<div class="t" id="t74" dir="rtl" style='left:1808.96px;top:785.70px;font-family:"Liberation Sans", sans-serif;font-size:12px;font-weight:normal;color:#194a64;-webkit-text-stroke:0.2px #194a64;transform:scaleX(1.0435)'>هزینه استهلاک</div>
<div class="t" id="t75" dir="ltr" style='left:875.96px;top:785.80px;font-family:"Liberation Sans", sans-serif;font-size:12px;font-weight:bold;color:#e3161e;transform:scaleX(1.1882)'>(۳۳۲,۸۶۵)</div>
<div class="t" id="t76" dir="ltr" style='left:452.00px;top:785.80px;font-family:"Liberation Sans", sans-serif;font-size:12px;font-weight:bold;color:#e3161e;transform:scaleX(1.0272)'>(۲۱۵,۳<span class="z"></span>۹)</div>
<div class="t" id="t77" dir="ltr" style='left:123.62px;top:786.08px;font-family:"Liberation Serif", serif;font-size:12.5px;font-weight:normal;color:#d3121b;-webkit-text-stroke:0.25px #d3121b;transform:scaleX(0.9670)'>(Infinity)</div>
<div class="t" id="t78" dir="rtl" style='left:1659.21px;top:809.84px;font-family:"Liberation Sans", sans-serif;font-size:12px;font-weight:normal;color:#194a64;-webkit-text-stroke:0.2px #194a64;transform:scaleX(0.9789)'>سود(زیان) عملیات در حال تداوم قبل از مالیات</div>
<div class="t" id="t79" dir="ltr" style='left:867.56px;top:809.94px;font-family:"Liberation Sans", sans-serif;font-size:12px;font-weight:bold;color:#e3161e;transform:scaleX(1.1340)'>(۵۴,۵۹۹,۷۸<span class="z"></span>)</div>
<div class="t" id="t80" dir="ltr" style='left:440.79px;top:809.94px;font-family:"Liberation Sans", sans-serif;font-size:12px;font-weight:bold;color:#e3161e;transform:scaleX(1.1083)'>(۴۶,۷۵<span class="z"></span>,۲<span class="z"></span>۵)</div>
<div class="t" id="t81" dir="ltr" style='left:123.62px;top:810.22px;font-family:"Liberation Serif", serif;font-size:12.5px;font-weight:normal;color:#d3121b;-webkit-text-stroke:0.25px #d3121b;transform:scaleX(0.9670)'>(Infinity)</div>
<div class="t" id="t82" dir="rtl" style='left:1754.65px;top:833.98px;font-family:"Liberation Sans", sans-serif;font-size:12px;font-weight:normal;color:#194a64;-webkit-text-stroke:0.2px #194a64;transform:scaleX(0.9699)'>مالیات بر درآمد سال جاری</div>
<div class="t" id="t83" dir="rtl" style='left:1737.83px;top:858.12px;font-family:"Liberation Sans", sans-serif;font-size:12px;font-weight:normal;color:#194a64;-webkit-text-stroke:0.2px #194a64;transform:scaleX(0.9849)'>مالیات بر درآمد سال های قبل</div>
<div class="t" id="t84" dir="rtl" style='left:1689.40px;top:882.26px;font-family:"Liberation Sans", sans-serif;font-size:12px;font-weight:normal;color:#194a64;-webkit-text-stroke:0.2px #194a64;transform:scaleX(0.9966)'>سود (زیان) خالص عملیات در حال تداوم</div>
<div class="t" id="t85" dir="ltr" style='left:867.56px;top:882.36px;font-family:"Liberation Sans", sans-serif;font-size:12px;font-weight:bold;color:#e3161e;transform:scaleX(1.1340)'>(۵۴,۵۹۹,۷۸<span class="z"></span>)</div>
<div class="t" id="t86" dir="ltr" style='left:440.79px;top:882.36px;font-family:"Liberation Sans", sans-serif;font-size:12px;font-weight:bold;color:#e3161e;transform:scaleX(1.1083)'>(۴۶,۷۵<span class="z"></span>,۲<span class="z"></span>۵)</div>
<div class="t" id="t87" dir="ltr" style='left:123.62px;top:882.64px;font-family:"Liberation Serif", serif;font-size:12.5px;font-weight:normal;color:#d3121b;-webkit-text-stroke:0.25px #d3121b;transform:scaleX(0.9670)'>(Infinity)</div>
<div class="t" id="t88" dir="rtl" style='left:1781.02px;top:906.40px;font-family:"Liberation Sans", sans-serif;font-size:12px;font-weight:bold;color:#194a64;-webkit-text-stroke:0.45px #194a64;transform:scaleX(0.9804)'>عملیات متوقف شده:</div>
<div class="t" id="t89" dir="rtl" style='left:1698.01px;top:930.54px;font-family:"Liberation Sans", sans-serif;font-size:12px;font-weight:normal;color:#194a64;-webkit-text-stroke:0.2px #194a64;transform:scaleX(0.9892)'>سود(زیان) خالص عملیات متوقف شده</div>
<div class="t" id="t90" dir="rtl" style='left:1797.20px;top:954.68px;font-family:"Liberation Sans", sans-serif;font-size:12px;font-weight:normal;color:#194a64;-webkit-text-stroke:0.2px #194a64;transform:scaleX(1.0147)'>سود(زیان) خالص</div>
<div class="t" id="t91" dir="ltr" style='left:867.56px;top:954.78px;font-family:"Liberation Sans", sans-serif;font-size:12px;font-weight:bold;color:#e3161e;transform:scaleX(1.1340)'>(۵۴,۵۹۹,۷۸<span class="z"></span>)</div>
<div class="t" id="t92" dir="ltr" style='left:440.79px;top:954.78px;font-family:"Liberation Sans", sans-serif;font-size:12px;font-weight:bold;color:#e3161e;transform:scaleX(1.1083)'>(۴۶,۷۵<span class="z"></span>,۲<span class="z"></span>۵)</div>
<div class="t" id="t93" dir="ltr" style='left:123.62px;top:955.06px;font-family:"Liberation Serif", serif;font-size:12.5px;font-weight:normal;color:#d3121b;-webkit-text-stroke:0.25px #d3121b;transform:scaleX(0.9670)'>(Infinity)</div>
<div class="t" id="t94" dir="rtl" style='left:1735.99px;top:978.82px;font-family:"Liberation Sans", sans-serif;font-size:12px;font-weight:bold;color:#194a64;-webkit-text-stroke:0.45px #194a64;transform:scaleX(0.9968)'>سود (زیان)پایه هر سهم (ریال)</div>
<div class="t" id="t95" dir="rtl" style='left:1810.99px;top:1002.96px;font-family:"Liberation Sans", sans-serif;font-size:12px;font-weight:normal;color:#194a64;-webkit-text-stroke:0.2px #194a64;transform:scaleX(0.9931)'>عملیاتي (ریال)</div>
<div class="t" id="t96" dir="rtl" style='left:1799.82px;top:1027.10px;font-family:"Liberation Sans", sans-serif;font-size:12px;font-weight:normal;color:#194a64;-webkit-text-stroke:0.2px #194a64;transform:scaleX(0.9513)'>غیرعملیاتي(ریال)</div>
<div class="t" id="t97" dir="rtl" style='left:1710.62px;top:1051.24px;font-family:"Liberation Sans", sans-serif;font-size:12px;font-weight:normal;color:#194a64;-webkit-text-stroke:0.2px #194a64;transform:scaleX(0.9721)'>ناشی از عملیات در حال تداوم(ریال)</div>
<div class="t" id="t98" dir="rtl" style='left:1717.66px;top:1075.38px;font-family:"Liberation Sans", sans-serif;font-size:12px;font-weight:normal;color:#194a64;-webkit-text-stroke:0.2px #194a64;transform:scaleX(0.9596)'>ناشی از عملیات متوقف شده(ریال)</div>
<div class="a" style="left:955px;top:535px;width:0;height:0;opacity:0.06"><div style="position:absolute;left:-340px;top:-62px;width:680px;height:124px;line-height:124px;text-align:center;font-family:'Liberation Sans',sans-serif;font-weight:bold;font-size:92px;color:#000;-webkit-text-stroke:3px #000;white-space:nowrap;transform:rotate(-45.6deg);transform-origin:50% 50%">@Codal360_ir</div></div>
</body></html>
